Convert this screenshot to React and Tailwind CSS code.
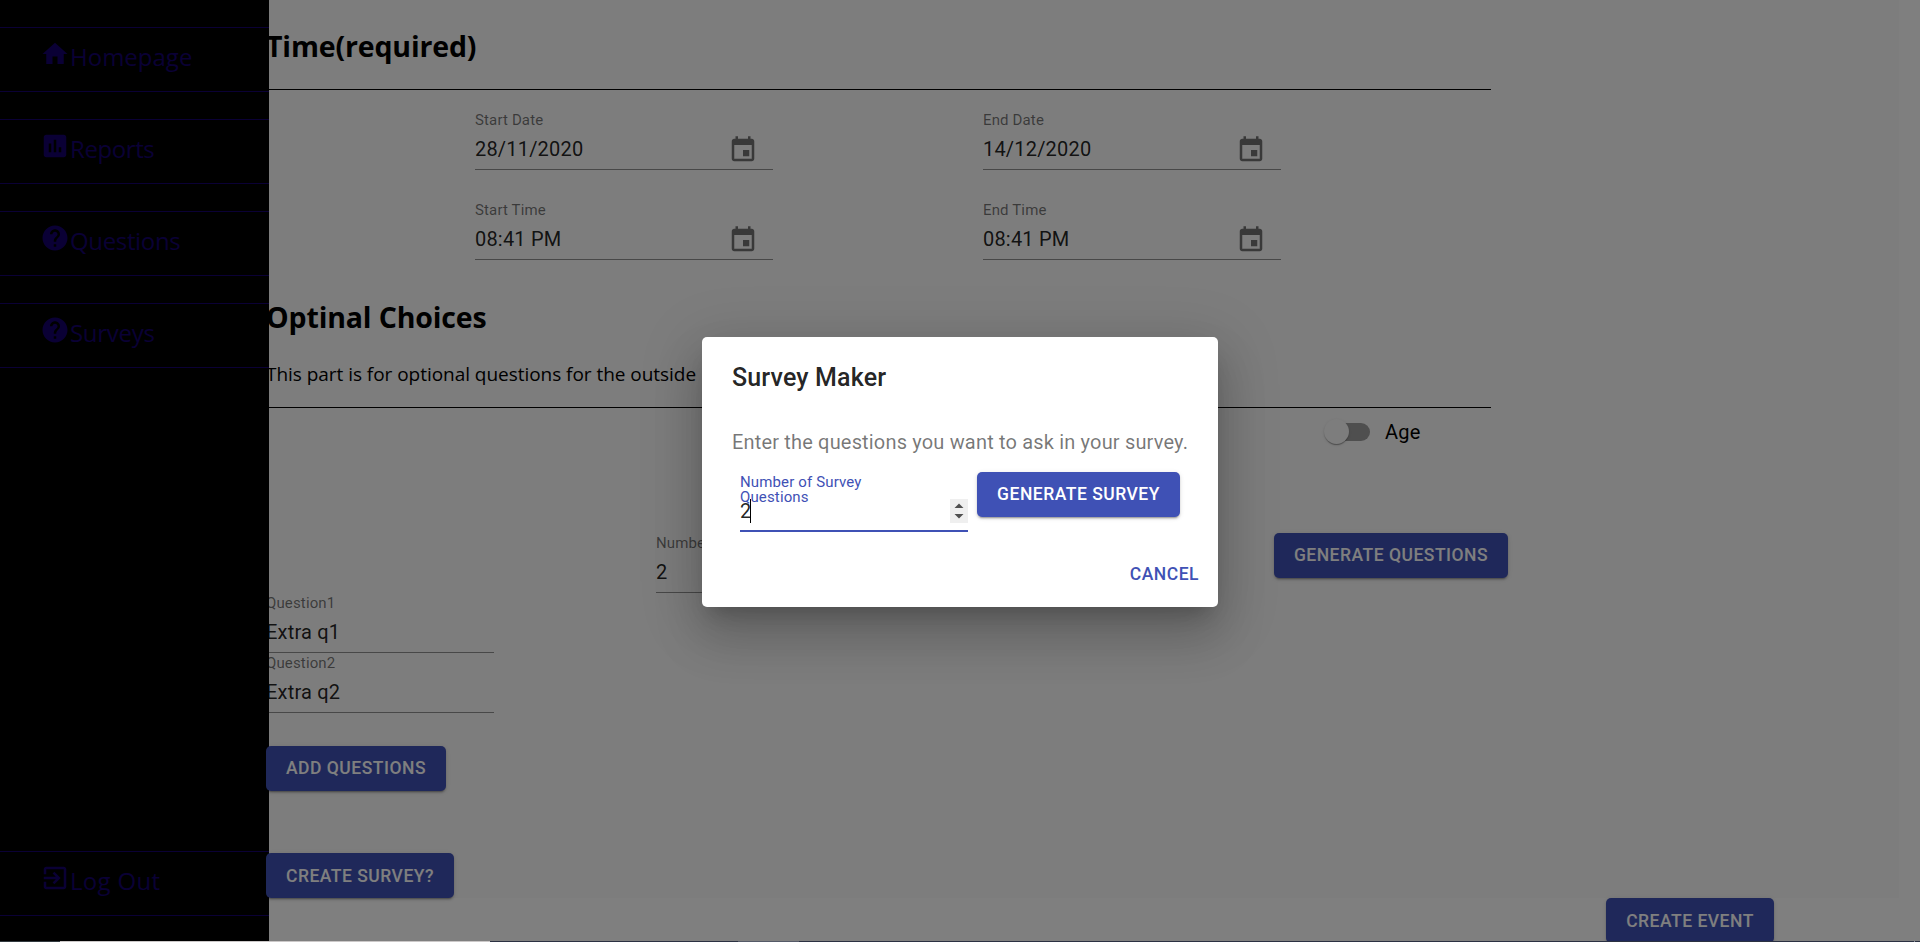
import React from "react";

const ICONS = {
  home: "M10 20v-6h4v6h5v-8h3L12 3 2 12h3v8z",
  reports:
    "M19 3H5c-1.1 0-2 .9-2 2v14c0 1.1.9 2 2 2h14c1.1 0 2-.9 2-2V5c0-1.1-.9-2-2-2zM9 17H7v-7h2v7zm4 0h-2V7h2v10zm4 0h-2v-4h2v4z",
  help: "M12 2C6.48 2 2 6.48 2 12s4.48 10 10 10 10-4.48 10-10S17.52 2 12 2zm1 17h-2v-2h2v2zm2.07-7.75l-.9.92C13.45 12.9 13 13.5 13 15h-2v-.5c0-1.1.45-2.1 1.17-2.83l1.24-1.26c.37-.36.59-.86.59-1.41 0-1.1-.9-2-2-2s-2 .9-2 2H8c0-2.21 1.79-4 4-4s4 1.79 4 4c0 .88-.36 1.68-.93 2.25z",
  exit: "M10.09 15.59L11.5 17l5-5-5-5-1.41 1.41L12.67 11H3v2h9.67l-2.58 2.59zM19 3H5c-1.11 0-2 .9-2 2v4h2V5h14v14H5v-4H3v4c0 1.1.89 2 2 2h14c1.1 0 2-.9 2-2V5c0-1.1-.9-2-2-2z",
  event:
    "M17 12h-5v5h5v-5zM16 1v2H8V1H6v2H5c-1.11 0-1.99.9-1.99 2L3 19c0 1.1.89 2 2 2h14c1.1 0 2-.9 2-2V5c0-1.1-.9-2-2-2h-1V1h-2zm3 18H5V8h14v11z",
};

function Icon({ name, className = "" }) {
  return (
    <svg viewBox="0 0 24 24" fill="currentColor" className={`size-[30px] shrink-0 ${className}`}>
      <path d={ICONS[name]} />
    </svg>
  );
}

function NavItem({ icon, label, tracking = "" }) {
  return (
    <a className="flex h-[65px] shrink-0 items-start border-y border-[#15006a] pl-10 pt-[11px] text-[#15006a]">
      <Icon name={icon} />
      <span className={`font-['Open_Sans',sans-serif] text-[24px] leading-[35px] ${tracking}`}>{label}</span>
    </a>
  );
}

function Button({ children, className = "" }) {
  return (
    <button
      className={`relative z-20 flex h-[45px] shrink-0 items-center justify-center whitespace-nowrap rounded-[5px] bg-[#3f51b5] text-[17.5px] font-medium tracking-[0.5px] text-white shadow-[0_3px_1px_-2px_rgba(0,0,0,0.2),0_2px_2px_0_rgba(0,0,0,0.14),0_1px_5px_0_rgba(0,0,0,0.12)] ${className}`}
    >
      {children}
    </button>
  );
}

function Field({ label, value, icon, className = "" }) {
  return (
    <div className={`flex h-[60px] shrink-0 flex-col overflow-hidden border-b border-black/42 pt-[3px] ${className}`}>
      <span className="whitespace-nowrap text-[15px] leading-[15px] tracking-[0.14px] text-black/54">{label}</span>
      <div className="mt-[6px] flex h-[30px] items-center justify-between pr-[15px]">
        <span className="text-[20px] leading-[24px] tracking-[0.19px] text-black/87">{value}</span>
        {icon && <Icon name={icon} className="mt-px text-black/54" />}
      </div>
    </div>
  );
}

function Sidebar() {
  return (
    <nav className="absolute inset-y-0 left-0 z-10 flex w-[269px] flex-col gap-[27px] bg-black pb-[25px] pt-[27px]">
      <NavItem icon="home" label="Homepage" />
      <NavItem icon="reports" label="Reports" tracking="tracking-[-0.4px]" />
      <NavItem icon="help" label="Questions" tracking="tracking-[-0.35px]" />
      <NavItem icon="help" label="Surveys" tracking="tracking-[-0.3px]" />
      <div className="mt-auto">
        <NavItem icon="exit" label="Log Out" tracking="tracking-[0.3px]" />
      </div>
    </nav>
  );
}

function EventForm() {
  return (
    <main className="flex h-[898px] w-[1899px] shrink-0 flex-col items-start bg-[#fafafa] pl-[266px]">
      <section className="h-[90px] w-[1225px] shrink-0 border-b border-black pt-[26px]">
        <h2 className="font-['Open_Sans',sans-serif] text-[28.5px] font-bold leading-[40px] tracking-[-0.15px]">
          Time(required)
        </h2>
      </section>
      <div className="ml-[209px] mt-[20px] grid grid-cols-[298px_298px] gap-x-[210px] gap-y-[30px]">
        <Field label="Start Date" value="28/11/2020" icon="event" />
        <Field label="End Date" value="14/12/2020" icon="event" />
        <Field label="Start Time" value="08:41 PM" icon="event" />
        <Field label="End Time" value="08:41 PM" icon="event" />
      </div>
      <section className="h-[148px] w-[1225px] shrink-0 border-b border-black pt-[37px]">
        <h2 className="font-['Open_Sans',sans-serif] text-[28.5px] font-bold leading-[40px] tracking-[-0.15px]">
          Optinal Choices
        </h2>
        <p className="mt-[24px] font-['Open_Sans',sans-serif] text-[19px] leading-[27px] tracking-[-0.04px]">
          This part is for optional questions for the outside
        </p>
      </section>
      <label className="ml-[1058px] flex h-[47px] shrink-0 items-center">
        <span className="flex h-[18px] w-[46px] items-center rounded-full bg-[linear-gradient(to_right,transparent_8px,#9e9e9e_8px)]">
          <span className="size-[25px] shrink-0 rounded-full bg-[#fafafa] shadow-[0_2px_1px_-1px_rgba(0,0,0,0.2),0_1px_1px_0_rgba(0,0,0,0.14),0_1px_3px_0_rgba(0,0,0,0.12)]" />
        </span>
        <span className="ml-[15px] text-[20px] leading-[30px] tracking-[0.19px]">Age</span>
      </label>
      <div className="mt-[78px] flex h-[60px] shrink-0">
        <Field label="Number of Questions" value="2" className="ml-[390px] w-[228px]" />
        <Button className="ml-[390px] w-[234px]">GENERATE QUESTIONS</Button>
      </div>
      <Field label="Question1" value="Extra q1" className="w-[228px]" />
      <Field label="Question2" value="Extra q2" className="w-[228px]" />
      <Button className="mt-[33px] w-[180px]">ADD QUESTIONS</Button>
      <Button className="mt-[62px] w-[188px] pt-[2px]">CREATE SURVEY?</Button>
    </main>
  );
}

function SurveyDialog() {
  return (
    <div className="absolute inset-0 z-30 flex items-center justify-center bg-black/50 pt-[2px]">
      <div
        role="dialog"
        className="flex h-[270px] w-[516px] flex-col rounded-[5px] bg-white shadow-[0_14px_19px_-9px_rgba(0,0,0,0.2),0_30px_48px_4px_rgba(0,0,0,0.14),0_11px_58px_10px_rgba(0,0,0,0.12)]"
      >
        <h1 className="px-[30px] pt-[21px] text-[25px] font-medium leading-[40px] tracking-[0.15px] text-black/87">
          Survey Maker
        </h1>
        <p className="mt-[29px] whitespace-nowrap px-[30px] text-[20px] leading-[30px] tracking-[0.17px] text-black/54">
          Enter the questions you want to ask in your survey.
        </p>
        <div className="ml-[38px] mt-[15px] flex gap-[9px]">
          <div className="flex h-[60px] w-[228px] flex-col border-b-2 border-[#3f51b5] pt-[3px]">
            <span className="w-[160px] text-[15px] leading-[15px] tracking-[0.14px] text-[#3f51b5]">
              Number of Survey Questions
            </span>
            <div className="-mt-[6px] flex h-[24px] items-center justify-between">
              <span className="h-[24px] w-[11px] border-r border-black text-[20px] leading-[24px] text-black/87">2</span>
              <span className="flex h-[24px] w-[18px] items-center justify-center bg-[#efefef] text-[#505050]">
                <svg viewBox="0 0 18 24" className="h-[24px] w-[18px]" fill="currentColor">
                  <path d="M4.5 9 9 4.5 13.5 9zM4.5 15 9 19.5 13.5 15z" />
                </svg>
              </span>
            </div>
          </div>
          <Button className="w-[203px]">GENERATE SURVEY</Button>
        </div>
        <button className="mr-[19px] mt-[26px] self-end text-[17.5px] font-medium leading-[32px] tracking-[0.5px] text-[#3f51b5]">
          CANCEL
        </button>
      </div>
    </div>
  );
}

export default function App() {
  return (
    <div className="flex h-[942px] w-[1920px] flex-col overflow-hidden font-[Roboto,sans-serif] text-black">
      <div className="relative flex h-[941px] shrink-0 flex-col items-start overflow-hidden bg-white">
        <Sidebar />
        <EventForm />
        <Button className="ml-[1606px] w-[168px] pt-[2px]">CREATE EVENT</Button>
        <SurveyDialog />
      </div>
      <div className="flex h-px bg-[#2b3142]">
        <span className="w-[60px] bg-[#32393f]" />
        <span className="w-[430px] bg-[#cbc8c8]" />
        <span className="ml-[248px] w-[61px] bg-[#555a68]" />
        <span className="ml-auto mr-[5px] w-px bg-[#8a8f98]" />
      </div>
    </div>
  );
}
